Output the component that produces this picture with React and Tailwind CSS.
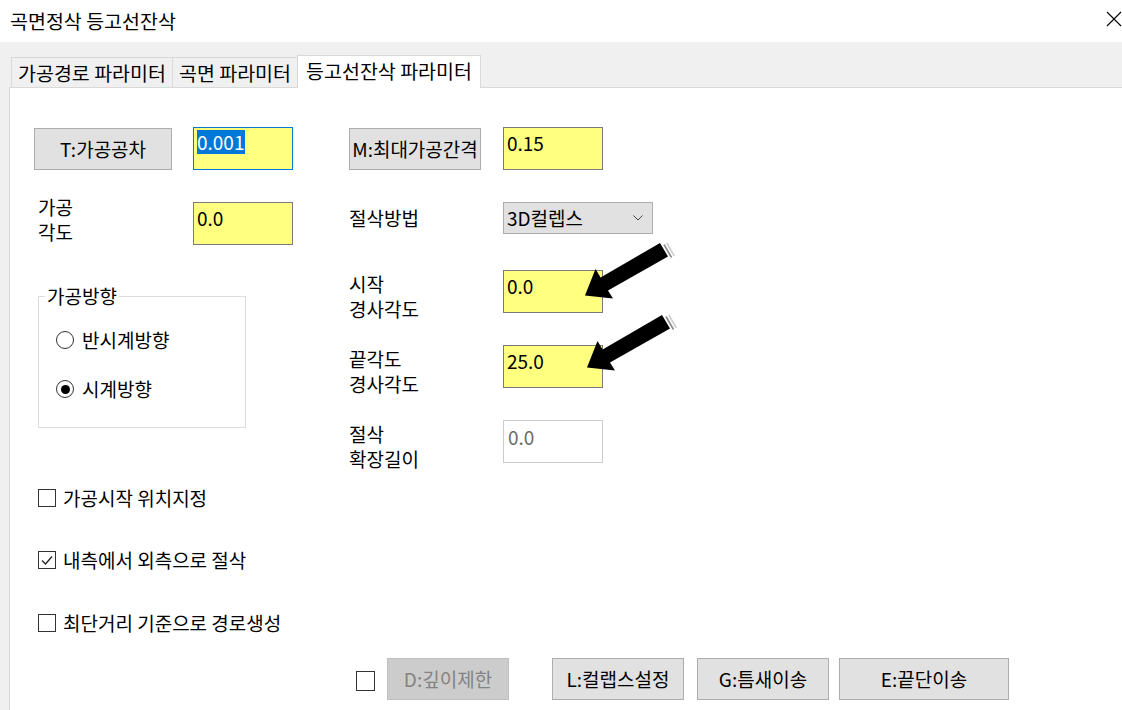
import React from 'react';

// 공통 버튼 (윈도우 기본 버튼 모양)
const Btn = ({ children, className = '', disabled }) => (
  <div
    className={`h-[42px] flex items-center justify-center border whitespace-nowrap ${
      disabled ? 'bg-[#cccccc] border-[#bfbfbf] text-[#838383]' : 'bg-[#e1e1e1] border-[#adadad] text-black'
    } ${className}`}
  >
    {children}
  </div>
);

// 노란 입력칸
const Field = ({ value, focused, disabled }) => {
  if (disabled) {
    return (
      <div className="w-[100px] h-[43px] border border-[#cccccc] bg-white pl-[4px] pt-[4px] text-[#6d6d6d]">
        {value}
      </div>
    );
  }
  return (
    <div
      className={`w-[100px] h-[43px] border bg-[#ffff80] pl-[3px] pt-[2px] ${
        focused ? 'border-[#0078d7]' : 'border-[#7a7a7a]'
      }`}
    >
      {focused ? <span className="bg-[#0078d7] text-white inline-block pr-[1px]">{value}</span> : <span className="inline-block pt-[1px]">{value}</span>}
    </div>
  );
};

const Check = ({ label, checked }) => (
  <div className="flex items-center h-[24px] ml-[4px]">
    <div className="w-[18px] h-[18px] border border-[#333333] bg-white flex items-center justify-center">
      {checked && (
        <svg width="14" height="14" viewBox="0 0 14 14">
          <path d="M2 7.5L5.5 11L12 3.5" fill="none" stroke="#222" strokeWidth="1.3" />
        </svg>
      )}
    </div>
    <span className="ml-[7px] whitespace-nowrap">{label}</span>
  </div>
);

const Radio = ({ label, checked, className = '' }) => (
  <div className={`flex items-center h-[24px] ${className}`}>
    <div className="w-[18px] h-[18px] rounded-full border border-[#333333] bg-white flex items-center justify-center">
      {checked && <div className="w-[9px] h-[9px] rounded-full bg-black" />}
    </div>
    <span className="ml-[8px] whitespace-nowrap">{label}</span>
  </div>
);

const Arrow = ({ dx = 0, dy = 0 }) => (
  <g transform={`translate(${dx} ${dy})`}>
    <line x1="664" y1="244.5" x2="671.5" y2="257.5" stroke="#8a8a8a" strokeWidth="1.6" />
    <line x1="666.8" y1="243" x2="674.3" y2="256" stroke="#cfcfcf" strokeWidth="1.6" />
    <polygon
      points="660,243 600.6,277.5 595.5,269 585,295.5 613,298.5 608,290.5 668,256.5"
      fill="#000"
    />
  </g>
);

export default function App() {
  return (
    <div className="relative w-[1122px] h-[710px] overflow-hidden bg-[#f0f0f0] text-black font-['Noto_Sans_CJK_KR',sans-serif] text-[19px] leading-[24px]">
      {/* 제목 표시줄 */}
      <div className="h-[42px] bg-white flex items-center justify-between pl-[10px]">
        <span className="text-[19.5px]">곡면정삭 등고선잔삭</span>
        <svg width="16" height="16" viewBox="0 0 16 16" className="mt-[-4px]">
          <path d="M1 1L15 15M15 1L1 15" stroke="#000" strokeWidth="1.1" />
        </svg>
      </div>

      <div className="pl-[9px] pt-[13px]">
        {/* 탭 */}
        <div className="flex items-end h-[32px] pl-[2px] text-[19.5px]">
          <div className="h-[30px] w-[162px] border border-b-0 border-[#d9d9d9] flex items-center justify-center whitespace-nowrap">
            가공경로 파라미터
          </div>
          <div className="h-[30px] w-[125px] border-t border-r border-[#d9d9d9] flex items-center justify-center whitespace-nowrap">
            곡면 파라미터
          </div>
          <div className="relative z-10 h-[33px] -mb-px -ml-px w-[184px] bg-white border border-b-0 border-[#d9d9d9] flex items-center justify-center pb-[2px] whitespace-nowrap">
            등고선잔삭 파라미터
          </div>
        </div>

        {/* 패널 */}
        <div className="bg-white border-t border-l border-[#d9d9d9] h-[700px]">
          <div className="flex">
            {/* 왼쪽 */}
            <div className="w-[339px] pl-[24px] pt-[39px] flex flex-col">
              <div className="flex items-center h-[43px]">
                <Btn className="w-[138px]">T:가공공차</Btn>
                <div className="ml-[21px]">
                  <Field value="0.001" focused />
                </div>
              </div>
              <div className="flex items-center h-[43px] mt-[32px]">
                <div className="w-[155px] ml-[4px] leading-[25px] mt-[-10px]">
                  가공
                  <br />
                  각도
                </div>
                <Field value="0.0" />
              </div>

              <fieldset className="mt-[39px] ml-[4px] w-[208px] border border-[#dcdcdc] p-0">
                <legend className="ml-[6px] px-[2px] leading-[24px]">가공방향</legend>
                <div className="pl-[17px] pb-[26px]">
                  <Radio label="반시계방향" className="mt-[20px]" />
                  <Radio label="시계방향" checked className="mt-[25px]" />
                </div>
              </fieldset>

              <div className="mt-[58px]">
                <Check label="가공시작 위치지정" />
              </div>
              <div className="mt-[38px]">
                <Check label="내측에서 외측으로 절삭" checked />
              </div>
              <div className="mt-[39px]">
                <Check label="최단거리 기준으로 경로생성" />
              </div>
            </div>

            {/* 오른쪽 */}
            <div className="pt-[39px] flex flex-col">
              <div className="flex items-center h-[43px]">
                <Btn className="w-[132px]">M:최대가공간격</Btn>
                <div className="ml-[22px]">
                  <Field value="0.15" />
                </div>
              </div>
              <div className="flex items-center h-[32px] mt-[32px]">
                <div className="w-[154px]">절삭방법</div>
                <div className="w-[150px] h-[32px] bg-[#e1e1e1] border border-[#adadad] flex items-center justify-between pl-[3px] pr-[9px]">
                  <span>3D컬렙스</span>
                  <svg width="10" height="6" viewBox="0 0 10 6">
                    <path d="M0.5 0.5L5 5L9.5 0.5" fill="none" stroke="#444" strokeWidth="1" />
                  </svg>
                </div>
              </div>
              <div className="flex items-center h-[43px] mt-[36px]">
                <div className="w-[154px] leading-[25px] mt-[8px]">
                  시작
                  <br />
                  경사각도
                </div>
                <Field value="0.0" />
              </div>
              <div className="flex items-center h-[43px] mt-[32px]">
                <div className="w-[154px] leading-[25px] mt-[8px]">
                  끝각도
                  <br />
                  경사각도
                </div>
                <Field value="25.0" />
              </div>
              <div className="flex items-center h-[43px] mt-[32px]">
                <div className="w-[154px] leading-[25px] mt-[8px]">
                  절삭
                  <br />
                  확장길이
                </div>
                <Field value="0.0" disabled />
              </div>
            </div>
          </div>

          {/* 하단 버튼 */}
          <div className="flex items-center h-[42px] mt-[23px] pl-[346px]">
            <div className="w-[19px] h-[20px] border border-[#333333] bg-white mt-[3px]" />
            <Btn disabled className="w-[122px] ml-[12px]">D:깊이제한</Btn>
            <Btn className="w-[132px] ml-[43px]">L:컬랩스설정</Btn>
            <Btn className="w-[132px] ml-[13px]">G:틈새이송</Btn>
            <Btn className="w-[170px] ml-[10px]">E:끝단이송</Btn>
          </div>
        </div>
      </div>

      {/* 화살표 표시 */}
      <svg className="absolute left-0 top-0 pointer-events-none" width="1122" height="710" viewBox="0 0 1122 710">
        <Arrow />
        <Arrow dx={2} dy={72} />
      </svg>
    </div>
  );
}
